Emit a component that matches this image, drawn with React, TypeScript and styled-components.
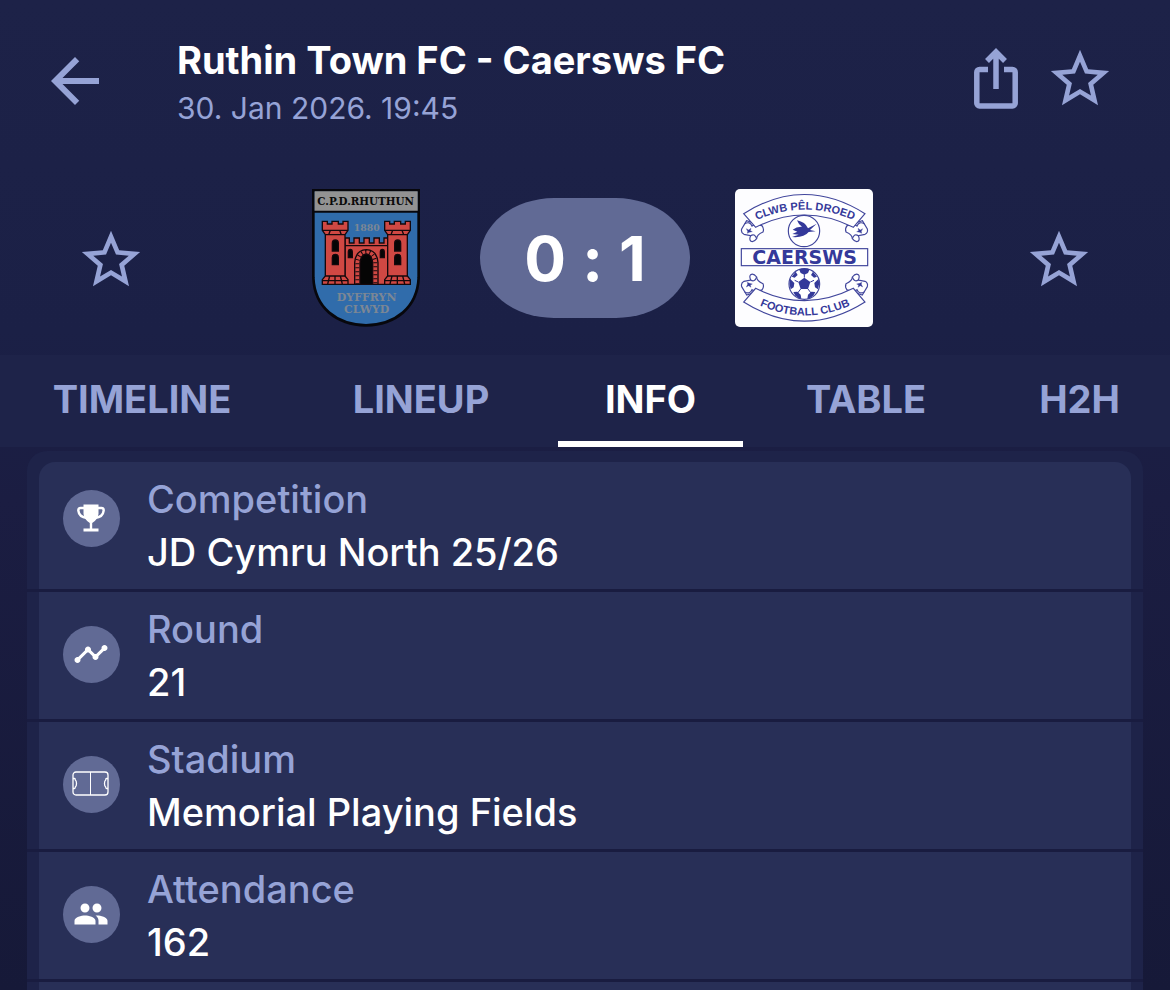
import React from 'react';
import styled, { createGlobalStyle } from 'styled-components';
import { MdArrowBack, MdPeople, MdStarBorder, MdTimeline } from 'react-icons/md';

const color = {
  page: '#1c2147',
  tabs: '#1e2349',
  rowBg: '#282f57',
  divider: '#191c40',
  muted: '#96a3d6',
  badge: '#616a95',
  white: '#ffffff',
};

const GlobalStyle = createGlobalStyle`
  * { box-sizing: border-box; }
  body {
    margin: 0;
    background: ${color.page};
    font-family: Inter, "Open Sans", sans-serif;
    color: ${color.white};
  }
  h1, p, dl, dt, dd { margin: 0; }
`;

const Page = styled.div`
  min-height: 100vh;
  display: flex;
  flex-direction: column;
  background: linear-gradient(180deg, #1d2248 0, #1b2046 330px, #1b1d42 500px, #161938 100%);
`;

const Header = styled.header`
  display: flex;
  align-items: flex-start;
  padding: 36px 55px 0 39px;
`;

const IconButton = styled.button<{ $width: number }>`
  display: flex;
  align-items: center;
  justify-content: center;
  width: ${(p) => p.$width}px;
  height: 90px;
  padding: 0;
  border: 0;
  background: none;
  color: ${color.muted};
  cursor: pointer;
  flex: none;
`;

const Heading = styled.div`
  flex: 1;
  min-width: 0;
  padding-left: 66px;
`;

const Title = styled.h1`
  font-size: 38px;
  line-height: 48px;
  font-weight: 700;
  white-space: nowrap;
`;

const Kickoff = styled.p`
  font-size: 30px;
  line-height: 48px;
  padding-bottom: 2px;
  color: ${color.muted};
`;

const Actions = styled.div`
  display: flex;
  gap: 27px;
  margin-top: -2px;
`;

const Scoreboard = styled.section`
  display: flex;
  align-items: center;
  justify-content: space-between;
  padding: 55px 76px 28px;

  > button {
    padding-top: 4px;
  }
`;

const Match = styled.div`
  display: flex;
  align-items: center;
  gap: 45px;
`;

const Crest = styled.svg`
  display: block;
  width: 138px;
  height: 138px;
`;

const Score = styled.div`
  display: flex;
  align-items: center;
  justify-content: center;
  gap: 16px;
  width: 210px;
  height: 120px;
  padding-top: 2px;
  border-radius: 74px / 60px;
  background: ${color.badge};
  font-size: 62px;
  line-height: 72px;
  font-weight: 700;
`;

const Tabs = styled.nav`
  display: grid;
  grid-template-columns: 284fr 274fr 185fr 246fr 181fr;
  background: ${color.tabs};
`;

const Tab = styled.button<{ $active?: boolean }>`
  height: 92px;
  padding: 2px 0 0;
  border: 0;
  border-bottom: 6px solid ${(p) => (p.$active ? color.white : 'transparent')};
  background: none;
  color: ${(p) => (p.$active ? color.white : color.muted)};
  font-family: inherit;
  font-size: 38px;
  line-height: 44px;
  font-weight: 700;
  cursor: pointer;
`;

const Card = styled.dl`
  flex: 1;
  display: flex;
  flex-direction: column;
  margin: 4px 27px 0;
  padding-top: 11px;
  border-radius: 20px 20px 0 0;
  background: ${color.tabs};
`;

const Row = styled.div<{ $first?: boolean }>`
  padding: 0 12px;
  border-bottom: 3px solid ${color.divider};
  --badge-top: ${(p) => (p.$first ? 28 : 34)}px;
  --radius: ${(p) => (p.$first ? 16 : 0)}px;
`;

const RowBody = styled.div`
  display: flex;
  align-items: flex-start;
  gap: 27px;
  padding: 0 24px;
  border-radius: var(--radius) var(--radius) 0 0;
  background: ${color.rowBg};
`;

const Badge = styled.span`
  display: flex;
  align-items: center;
  justify-content: center;
  width: 57px;
  height: 57px;
  margin-top: var(--badge-top);
  padding: 0 2px 2px 0;
  border-radius: 50%;
  background: ${color.badge};
  flex: none;
`;

const RowText = styled.div`
  padding: 11px 0 10px;
  font-size: 38px;
  line-height: 53px;
  font-weight: 500;
`;

const Label = styled.dt`
  color: ${color.muted};
`;

const NextRow = styled.div`
  flex: 1;
  margin: 0 12px;
  background: ${color.rowBg};
`;

const ShareIcon = () => (
  <svg width="44" height="62" viewBox="0 0 44 62" fill="none" stroke="currentColor" strokeWidth="5.500">
    <path d="M14 21.500H5.500a2.700 2.700 0 0 0-2.700 2.700v31a2.700 2.700 0 0 0 2.700 2.700h33a2.700 2.700 0 0 0 2.700-2.700v-31a2.700 2.700 0 0 0-2.700-2.700H30" />
    <path d="M22 41V6M13 13l9-9 9 9" />
  </svg>
);

const TrophyIcon = () => (
  <svg width="28" height="28" viewBox="0 0 28 28" fill="none" stroke="#fff">
    <path d="M7 4H3.500Q1.300 4 1.300 6.500Q2 13 10 14M21 4H24.500Q26.700 4 26.700 6.500Q26 13 18 14" strokeWidth="2.400" />
    <path d="M6.500 0.500H21.500V10Q20.500 16 15.200 19V24.500H21.500V27.500H6.500V24.500H12.800V19Q7.500 16 6.500 10Z" fill="#fff" stroke="none" />
  </svg>
);

const PitchIcon = () => (
  <svg width="37" height="25" viewBox="0 0 37 25" fill="none" stroke="#fff" strokeWidth="1.300">
    <rect x="1" y="1" width="35" height="23" rx="3" />
    <path d="M18.500 1V24" strokeWidth="1" />
    <path d="M1 7.500h1.500q.8 0 .8 1.500q1.200.8 1.200 3.500t-1.200 3.500q0 1.500-.8 1.500H1M36 7.500h-1.500q-.8 0-.8 1.500q-1.200.8-1.200 3.500t1.200 3.500q0 1.500.8 1.500H36" />
  </svg>
);

const Tower = () => (
  <g>
    <path d="M67 124h15v8h14v-8h19v8h14v-8h15v27l-9 13v124l9 11v14H67v-14l9-11V164l-9-13Z" />
    <path d="M67 151h77M76 164h59M76 288h59M67 302h77M91 151l-5 13M119 151l5 13M89 288l-6 24M121 288l6 24M105 288v24" fill="none" />
    <path d="M97 213v-23q0-10 9-10t9 10v23ZM97 254v-21q0-10 9-10t9 10v21Z" fill="#050505" />
  </g>
);

const RuthinCrest = () => (
  <Crest viewBox="-9 27 414 414" role="img" aria-label="C.P.D. Rhuthun crest">
    <path d="M40 31H356V293C352 384 286 434 198 436C110 434 44 384 40 293Z" fill="#306cab" stroke="#07070c" strokeWidth="8" />
    <path d="M44 34H353V94H44Z" fill="#929292" />
    <path d="M40 95H356" stroke="#07070c" strokeWidth="6" />
    <g fontFamily="'DejaVu Serif', serif" fontWeight="700" textAnchor="middle">
      <text x="197" y="76" fontSize="31" fill="#0a0a0a">C.P.D.RHUTHUN</text>
      <g fill="#7c8795">
        <text x="200" y="153" fontSize="28">1880</text>
        <text x="200" y="364" fontSize="33">DYFFRYN</text>
        <text x="200" y="399" fontSize="33">CLWYD</text>
      </g>
    </g>
    <g fill="#d04843" stroke="#15080c" strokeWidth="4">
      <path d="M135 174h13v15h14v-15h16v15h14v-15h16v15h14v-15h16v15h14v-15h13v139H135Z" />
      <path d="M135 197H265" />
      <path d="M164 313v-65q3-38 35-39q32 1 35 39v65Z" />
      <path d="M172 313v-67q5-29 27-30q22 1 27 30V313" fill="none" strokeWidth="12" strokeDasharray="3 9" />
      <path d="M180 313v-65q3-25 19-26q16 1 19 26v65Z" fill="#050505" />
      <path d="M145 233v-17q0-8 6-8t6 8v17ZM241 233v-17q0-8 6-8t6 8v17Z" fill="#050505" />
      <Tower />
      <g transform="translate(187 0)"><Tower /></g>
    </g>
  </Crest>
);

const Scroll = () => (
  <g>
    <path d="M50 113L35 138Q32 149 42 154L62 158Q57 169 62 174Q70 180 80 167Q80 155 99 147Q103 138 96 128Z" fill="#fff" />
    <path d="M62 158Q74 150 80 167M44 122Q60 114 66 129Q74 123 96 128" fill="none" />
    <path d="M49 137l7 4 7-5-2 7 6 3-9 2-6 3 1-6Z" fill="#34399a" strokeWidth="1" />
  </g>
);

const CaerswsCrest = () => (
  <Crest viewBox="15 18 414 414" role="img" aria-label="Caersws Football Club crest">
    <rect x="15" y="18" width="414" height="414" rx="15" fill="#fdfdff" />
    <g stroke="#41469c" strokeWidth="3.500" fill="#fff">
      <Scroll />
      <g transform="translate(447 0) scale(-1 1)"><Scroll /></g>
      <g transform="translate(0 449) scale(1 -1)"><Scroll /></g>
      <g transform="translate(447 449) scale(-1 -1)"><Scroll /></g>
      <path d="M41 92Q223 -23 405 92L370 133Q223 59 77 133Z" />
      <path d="M41 357Q223 472 405 357L370 316Q223 390 77 316Z" />
      <circle cx="222" cy="144" r="47" />
      <rect x="34" y="197" width="379" height="51" />
      <circle cx="223" cy="303" r="46" />
    </g>
    <path d="M188 140Q200 130 216 131Q205 124 201 112Q226 117 234 136L260 122L240 141L257 145L236 147Q222 165 186 162L206 155L187 153L202 146Z" fill="#34399a" />
    <g fill="#34399a">
      <path d="M223 284l18 13-7 21h-22l-7-21ZM207 259q16-5 32 0l-5 11-11 5-11-5ZM266 287q4 17-2 32l-9-6-2-13ZM180 287q-4 17 2 32l9-6 2-13ZM250 338q-8 7-18 10l2-13 10-9 12 1ZM196 338q8 7 18 10l-2-13-10-9-12 1ZM249 266l12 15-9 3-9-8ZM197 266l-12 15 9 3 9-8Z" />
      <path d="M223 284v-10M241 297l11-5M234 318l9 12M212 318l-9 12M205 297l-11-5" stroke="#34399a" strokeWidth="3" />
    </g>
    <g fill="#34399a" fontFamily="'Liberation Sans', Arial, sans-serif" fontWeight="700" textAnchor="middle">
      <text x="224" y="243" fontSize="57" fontFamily="'DejaVu Sans', sans-serif">CAERSWS</text>
      <path id="arc-top" d="M66 117Q225 43 384 117" fill="none" />
      <path id="arc-bottom" d="M72 359Q225 436 378 359" fill="none" />
      <text fontSize="33"><textPath href="#arc-top" startOffset="50%">CLWB PÊL DROED</textPath></text>
      <text fontSize="33"><textPath href="#arc-bottom" startOffset="50%">FOOTBALL CLUB</textPath></text>
    </g>
  </Crest>
);

const tabs = ['TIMELINE', 'LINEUP', 'INFO', 'TABLE', 'H2H'];

const details = [
  { label: 'Competition', value: 'JD Cymru North 25/26', icon: <TrophyIcon /> },
  { label: 'Round', value: '21', icon: <MdTimeline size={36} /> },
  { label: 'Stadium', value: 'Memorial Playing Fields', icon: <PitchIcon /> },
  { label: 'Attendance', value: '162', icon: <MdPeople size={36} /> },
];

export default function App() {
  return (
    <>
      <GlobalStyle />
      <Page>
        <Header>
          <IconButton $width={72} aria-label="Back"><MdArrowBack size={72} /></IconButton>
          <Heading>
            <Title>Ruthin Town FC - Caersws FC</Title>
            <Kickoff>30. Jan 2026. 19:45</Kickoff>
          </Heading>
          <Actions>
            <IconButton $width={44} aria-label="Share"><ShareIcon /></IconButton>
            <IconButton $width={70} aria-label="Follow match"><MdStarBorder size={70} /></IconButton>
          </Actions>
        </Header>
        <Scoreboard>
          <IconButton $width={70} aria-label="Follow Ruthin Town FC"><MdStarBorder size={70} /></IconButton>
          <Match>
            <RuthinCrest />
            <Score><span>0</span><span>:</span><span>1</span></Score>
            <CaerswsCrest />
          </Match>
          <IconButton $width={70} aria-label="Follow Caersws FC"><MdStarBorder size={70} /></IconButton>
        </Scoreboard>
        <Tabs>
          {tabs.map((name) => (
            <Tab key={name} $active={name === 'INFO'}>{name}</Tab>
          ))}
        </Tabs>
        <Card>
          {details.map((item, index) => (
            <Row key={item.label} $first={index === 0}>
              <RowBody>
                <Badge>{item.icon}</Badge>
                <RowText>
                  <Label>{item.label}</Label>
                  <dd>{item.value}</dd>
                </RowText>
              </RowBody>
            </Row>
          ))}
          <NextRow />
        </Card>
      </Page>
    </>
  );
}
